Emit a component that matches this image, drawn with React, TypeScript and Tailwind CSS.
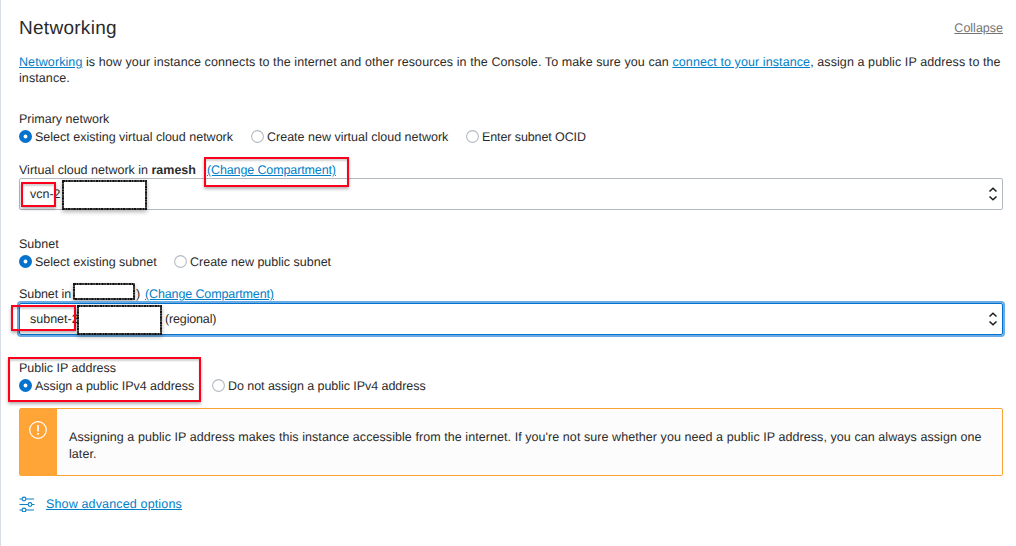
import type { ReactNode } from "react";

function Radio({ checked, children, className }: { checked?: boolean; children: ReactNode; className?: string }) {
  return (
    <label className={`flex items-center gap-[3px] whitespace-nowrap ${className ?? ""}`}>
      <svg width="13" height="13" viewBox="0 0 13 13" className="mb-px shrink-0">
        {checked ? (
          <>
            <circle cx="6.5" cy="6.5" r="6.5" fill="#0572ce" />
            <circle cx="6.5" cy="6.5" r="1.9" fill="#fff" />
          </>
        ) : (
          <circle cx="6.5" cy="6.5" r="5.9" fill="#fff" stroke="#b3bac2" strokeWidth="1.1" />
        )}
      </svg>
      <span>{children}</span>
    </label>
  );
}

function Link({ children, className }: { children: ReactNode; className?: string }) {
  return <a className={`text-[#0080c8] underline underline-offset-1 ${className ?? ""}`}>{children}</a>;
}

function Arrows() {
  return (
    <svg width="10" height="14" viewBox="0 0 10 14" fill="none" stroke="#1a1a1a" strokeWidth="1.5" className="ml-auto">
      <path d="M1.5 4.5 5 1.2 8.5 4.5M1.5 9.5 5 12.8 8.5 9.5" />
    </svg>
  );
}

function Mark({ className }: { className: string }) {
  return <div className={`pointer-events-none absolute border-2 border-[#fc001e] shadow-[0_2px_3px_rgba(0,0,0,0.3),inset_0_2px_2px_rgba(0,0,0,0.18)] ${className}`} />;
}

function Redaction({ className, w, h }: { className: string; w: number; h: number }) {
  return (
    <svg width={w} height={h} className={`absolute drop-shadow-[0_2px_2px_rgba(0,0,0,0.3)] ${className}`}>
      <rect x="1" y="1" width={w - 2} height={h - 2} fill="#fff" stroke="#333" strokeWidth="1.6" />
      <rect x="1" y="1" width={w - 2} height={h - 2} fill="none" stroke="#111" strokeWidth="1.9" strokeDasharray="2 1 1 1.5" />
    </svg>
  );
}

export default function App() {
  return (
    <main className="h-[546px] w-[1016px] overflow-hidden border-l border-[#d9dde5] bg-white pl-[18px] pr-[13px] pt-3 font-['Liberation_Sans',Arial,sans-serif] text-[12.5px] leading-[18px] text-[#2b2b2b] [text-rendering:geometricPrecision]">
      <header className="flex h-8 items-center justify-between">
        <h2 className="pt-px text-[19px] leading-8 tracking-[0.28px]">Networking</h2>
        <a className="text-[#757575] underline underline-offset-1">Collapse</a>
      </header>
      <p className="mt-[10px] h-8 whitespace-nowrap leading-4 tracking-[0.09px]">
        <Link>Networking</Link> is how your instance connects to the internet and other resources in the Console. To make sure you can <Link>connect to your instance</Link>, assign a public IP address to the
        <br />
        instance.
      </p>

      <section className="mt-6">
        <h3>Primary network</h3>
        <div className="flex h-[18px] items-center">
          <Radio checked className="w-[232px]">Select existing virtual cloud network</Radio>
          <Radio className="w-[215px]">Create new virtual cloud network</Radio>
          <Radio className="tracking-[-0.1px]">Enter subnet OCID</Radio>
        </div>
        <div className="relative mt-[15px] flex h-[17px] whitespace-nowrap">
          <span className="w-[188px]">Virtual cloud network in <b>ramesh</b></span>
          <Link className="tracking-[-0.12px]">(Change Compartment)</Link>
          <Mark className="left-[185px] top-[-4px] z-10 h-[30px] w-[145px]" />
        </div>
        <div className="relative flex h-8 w-[984px] items-center rounded-[2px] border border-[#b3b9c0] pl-[10px] pr-1">
          <span>vcn-2</span>
          <Arrows />
          <Mark className="left-[1px] top-[3px] h-[25px] w-[35px]" />
          <Redaction className="left-[42px] top-[1px]" w={85} h={30} />
        </div>
      </section>

      <section className="mt-[25px]">
        <h3>Subnet</h3>
        <div className="flex h-[18px] items-center">
          <Radio checked className="w-[155px]">Select existing subnet</Radio>
          <Radio>Create new public subnet</Radio>
        </div>
        <div className="relative mt-[14px] flex h-[18px] whitespace-nowrap">
          <span className="w-[117px] tracking-[-0.08px]">Subnet in</span>
          <span className="w-[9px]">)</span>
          <Link className="tracking-[-0.12px]">(Change Compartment)</Link>
          <Redaction className="left-[54px] top-[-2px]" w={62} h={17} />
        </div>
        <div className="relative flex h-8 w-[984px] items-center rounded-[2px] border border-[#0572ce] pl-[10px] pr-1 shadow-[0_0_0_2px_#69abe2]">
          <span className="w-[135px]">subnet-2</span>
          <span className="tracking-[-0.15px]">(regional)</span>
          <Arrows />
          <Mark className="left-[-9px] top-[1px] h-[26px] w-[65px]" />
          <Redaction className="left-[57px] top-[1px]" w={85} h={30} />
        </div>
      </section>

      <section className="relative mt-6">
        <h3>Public IP address</h3>
        <div className="flex h-[18px] items-center tracking-[-0.05px]">
          <Radio checked className="w-[193px]">Assign a public IPv4 address</Radio>
          <Radio>Do not assign a public IPv4 address</Radio>
        </div>
        <Mark className="left-[-11px] top-[-2px] h-[45px] w-[193px]" />
      </section>

      <aside className="mt-[13px] flex h-[68px] w-[984px] overflow-hidden rounded-[2px] border border-[#fba436] bg-[#fcfcfc]">
        <div className="flex w-[37px] justify-center bg-[#ffa436] pr-px pt-3">
          <svg width="18" height="18" viewBox="0 0 18 18" fill="none" stroke="#fff" className="shrink-0">
            <circle cx="9" cy="9" r="8.3" strokeWidth="1.2" />
            <path d="M9 4v6.5M9 12v1.8" strokeWidth="1.7" />
          </svg>
        </div>
        <p className="whitespace-nowrap pl-3 pt-5 leading-[17px] tracking-[0.067px]">
          Assigning a public IP address makes this instance accessible from the internet. If you're not sure whether you need a public IP address, you can always assign one
          <br />
          later.
        </p>
      </aside>

      <footer className="mt-[19px] flex h-[18px] items-center gap-[11px]">
        <svg width="16" height="16" viewBox="0 0 16 16" fill="none" stroke="#0b80c8" strokeWidth="1.1">
          <path d="M.5 3h2.5M7 3h8M.5 8.5h8.5M13 8.5h2.5M.5 14h2.5M7 14h8" />
          <circle cx="5" cy="3" r="1.9" />
          <circle cx="11" cy="8.5" r="1.9" />
          <circle cx="5" cy="14" r="1.9" />
        </svg>
        <Link className="tracking-[0.15px]">Show advanced options</Link>
      </footer>
    </main>
  );
}
